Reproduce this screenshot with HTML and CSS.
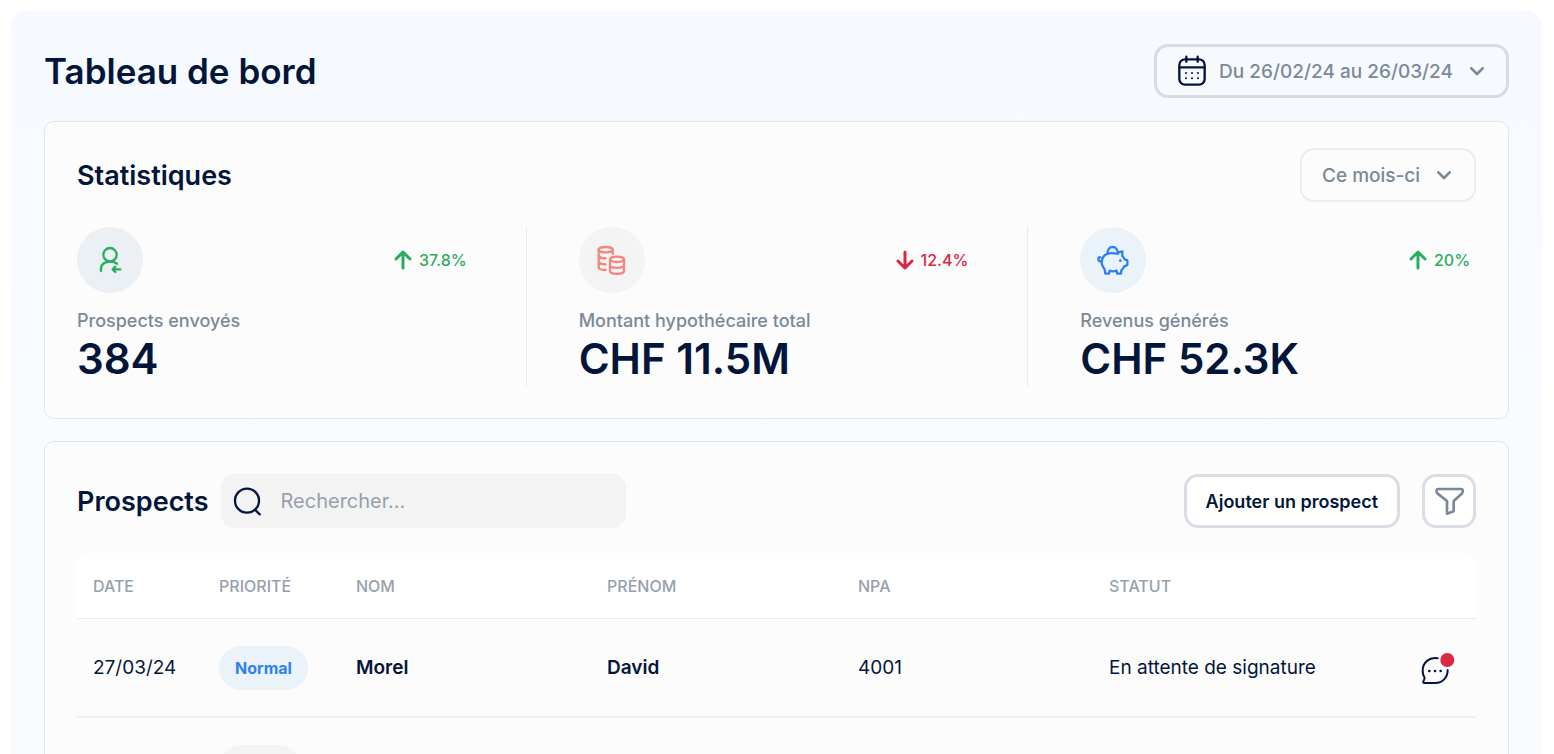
FILE: index.html
```html
<!DOCTYPE html>
<html lang="fr">
<head>
    <meta charset="UTF-8">
    <meta name="viewport" content="width=device-width, initial-scale=1.0">
    <title>Tableau de bord</title>
    <link rel="stylesheet" href="styles.css">
</head>
<body>
    <main class="dashboard">
        <header class="page-header">
            <h1>Tableau de bord</h1>
            <button type="button" class="btn date-range" aria-haspopup="dialog">
                <svg class="icon-calendar" width="30" height="32" viewBox="0 0 90 96" aria-hidden="true">
                    <rect x="7" y="13" width="76" height="76" rx="17"/>
                    <path d="M7 37H83M28 5V20M62 5V20"/>
                    <g class="dots">
                        <circle cx="27" cy="54" r="3"/><circle cx="45" cy="54" r="3"/><circle cx="63" cy="54" r="3"/>
                        <circle cx="27" cy="70" r="3"/><circle cx="45" cy="70" r="3"/><circle cx="63" cy="70" r="3"/>
                    </g>
                </svg>
                <span>Du 26/02/24 au 26/03/24</span>
                <svg class="chevron" width="14" height="9" viewBox="0 0 42 27" aria-hidden="true"><path d="M4 4L21 21L38 4"/></svg>
            </button>
        </header>

        <section class="card">
            <div class="card-header">
                <h2>Statistiques</h2>
                <div class="period">
                    <select aria-label="Période">
                        <option>Ce mois-ci</option>
                    </select>
                    <svg class="chevron" width="14" height="9" viewBox="0 0 42 27" aria-hidden="true"><path d="M4 4L21 21L38 4"/></svg>
                </div>
            </div>

            <div class="stats">
                <div class="stat">
                    <div class="stat-top">
                        <span class="stat-icon green">
                            <svg width="26" height="30" viewBox="0 0 78 90" aria-hidden="true">
                                <circle cx="39" cy="29" r="20"/>
                                <path d="M12 78V71C12 58 24 50 39 50C48 50 55 52 60 56M70 73H48M55 65L47 73L55 81"/>
                            </svg>
                        </span>
                        <span class="trend up">
                            <svg width="18" height="20" viewBox="0 0 18 20" aria-hidden="true"><path d="M9 18V2M2 9L9 2L16 9"/></svg>
                            37.8%
                        </span>
                    </div>
                    <p class="stat-label">Prospects envoyés</p>
                    <p class="stat-value">384</p>
                </div>
                <div class="stat">
                    <div class="stat-top">
                        <span class="stat-icon coral">
                            <svg width="33" height="30" viewBox="0 0 99 90" aria-hidden="true">
                                <ellipse cx="32" cy="14" rx="21" ry="8"/>
                                <path d="M11 14V67C11 72 19 75 32 75M53 14V27M11 31C11 37 20 40 32 40M11 49C11 55 19 58 32 58"/>
                                <ellipse cx="66" cy="43" rx="21" ry="8"/>
                                <path d="M45 43V79C45 89 87 89 87 79V43M45 61C45 71 87 71 87 61"/>
                            </svg>
                        </span>
                        <span class="trend down">
                            <svg width="18" height="20" viewBox="0 0 18 20" aria-hidden="true"><path d="M9 2V18M2 11L9 18L16 11"/></svg>
                            12.4%
                        </span>
                    </div>
                    <p class="stat-label">Montant hypothécaire total</p>
                    <p class="stat-value">CHF 11.5M</p>
                </div>
                <div class="stat">
                    <div class="stat-top">
                        <span class="stat-icon blue">
                            <svg width="32" height="30" viewBox="0 0 96 90" aria-hidden="true">
                                <path d="M32 26C31 14 37 6 47 6C57 6 63 14 62 26"/>
                                <path d="M32 26C37 24 55 25 62 26C65 22 71 19 76 19V33C79 36 81 39 83 43L91 46V60L81 65C79 70 77 73 73 76L72 86H61L59 77C53 79 43 79 38 77L36 86H25L23 73C18 68 16 63 14 55C14 40 20 30 32 26Z"/>
                                <path d="M15 49C8 50 4 47 4 42C4 38 7 36 10 37"/>
                                <circle class="eye" cx="70" cy="47" r="4"/>
                            </svg>
                        </span>
                        <span class="trend up">
                            <svg width="18" height="20" viewBox="0 0 18 20" aria-hidden="true"><path d="M9 18V2M2 9L9 2L16 9"/></svg>
                            20%
                        </span>
                    </div>
                    <p class="stat-label">Revenus générés</p>
                    <p class="stat-value">CHF 52.3K</p>
                </div>
            </div>
        </section>

        <section class="card">
            <div class="toolbar">
                <h2>Prospects</h2>
                <label class="search">
                    <svg width="29" height="29" viewBox="0 0 87 87" aria-hidden="true">
                        <circle cx="42" cy="41" r="36"/>
                        <path d="M67 69L80 82"/>
                    </svg>
                    <input type="search" placeholder="Rechercher..." aria-label="Rechercher">
                </label>
                <button type="button" class="btn add">Ajouter un prospect</button>
                <button type="button" class="btn filter" aria-label="Filtrer">
                    <svg width="29" height="28" viewBox="0 0 87 84" aria-hidden="true">
                        <path d="M10 6H78Q83 6 83 11V15Q83 18 80 20L56 42V73L36 80V42L8 20Q5 18 5 15V11Q5 6 10 6Z"/>
                    </svg>
                </button>
            </div>

            <table class="prospects">
                <colgroup>
                    <col class="col-date">
                    <col class="col-priority">
                    <col span="4">
                    <col class="col-actions">
                </colgroup>
                <thead>
                    <tr>
                        <th scope="col">DATE</th>
                        <th scope="col">PRIORITÉ</th>
                        <th scope="col">NOM</th>
                        <th scope="col">PRÉNOM</th>
                        <th scope="col">NPA</th>
                        <th scope="col">STATUT</th>
                        <td></td>
                    </tr>
                </thead>
                <tbody>
                    <tr>
                        <td>27/03/24</td>
                        <td><span class="badge">Normal</span></td>
                        <td class="name">Morel</td>
                        <td class="name">David</td>
                        <td>4001</td>
                        <td>En attente de signature</td>
                        <td class="actions">
                            <button type="button" class="chat" aria-label="Messages">
                                <svg width="34" height="32" viewBox="0 0 102 96" aria-hidden="true">
                                    <path d="M50 19C25 14 5 32 5 56C5 65 7 72 11 78C10 82 9 85 7 88C6 91 7 93 10 93H43C64 93 80 77 80 54"/>
                                    <circle class="dot" cx="25" cy="57" r="4"/><circle class="dot" cx="42" cy="57" r="4"/><circle class="dot" cx="59" cy="57" r="4"/>
                                    <circle class="unread" cx="79" cy="24" r="21"/>
                                </svg>
                            </button>
                        </td>
                    </tr>
                    <tr>
                        <td></td>
                        <td><span class="badge low"></span></td>
                        <td></td>
                        <td></td>
                        <td></td>
                        <td></td>
                        <td></td>
                    </tr>
                </tbody>
            </table>
        </section>
    </main>
</body>
</html>
```
FILE: styles.css
```css
* {
    box-sizing: border-box;
}
body {
    margin: 0;
    height: 100vh;
    overflow: hidden;
    background-color: #fff;
    color: #03163a;
    font-family: Inter, sans-serif;
    font-size: 19px;
}
h1, h2, p {
    margin: 0;
}
h1 {
    font-size: 35px;
    font-weight: 600;
}
h2 {
    font-size: 27px;
    font-weight: 600;
}
button, input, select {
    font: inherit;
    color: inherit;
}
svg {
    display: block;
    flex: none;
    fill: none;
    stroke: currentColor;
    stroke-linecap: round;
    stroke-linejoin: round;
}
.dashboard {
    margin: 11px 12px 0 11px;
    padding: 33px;
    border-radius: 16px;
    background: linear-gradient(#f6faff, #f8fcff 500px);
}
.page-header, .card-header, .toolbar {
    display: flex;
    align-items: center;
    justify-content: space-between;
    height: 54px;
}
.btn {
    display: flex;
    align-items: center;
    justify-content: center;
    height: 54px;
    padding: 0 19px;
    border: 3px solid #d9dee5;
    border-radius: 14px;
    background-color: #fff;
    cursor: pointer;
}
.date-range {
    gap: 12px;
    padding: 0 22px 0 20px;
    border-color: #d8dce1;
    background-color: transparent;
    color: #7a8999;
    font-weight: 500;
}
.date-range .chevron {
    margin-left: 5px;
}
.icon-calendar {
    color: #03163a;
    stroke-width: 7;
}
.icon-calendar .dots {
    fill: currentColor;
    stroke: none;
}
.chevron {
    stroke-width: 8;
}
.card {
    margin-top: 23px;
    padding: 26px 32px 32px;
    border: 1px solid #dfe5ee;
    border-radius: 10px;
    background-color: #fcfcfc;
}
.card + .card {
    margin-top: 22px;
}
.period {
    display: grid;
    align-items: center;
    color: #7a8999;
}
.period select, .period .chevron {
    grid-area: 1 / 1;
}
.period select {
    appearance: none;
    height: 54px;
    padding: 0 53px 0 20px;
    border: 2px solid #ececee;
    border-radius: 14px;
    background-color: transparent;
    font-weight: 500;
}
.period .chevron {
    justify-self: end;
    margin-right: 25px;
    pointer-events: none;
}
.stats {
    display: flex;
    margin-top: 25px;
}
.stat {
    flex: 1;
    padding-right: 53px;
}
.stat:last-child {
    padding-right: 0;
}
.stat + .stat {
    padding-left: 52px;
    border-left: 1px solid #e8eaed;
}
.stat-top {
    display: flex;
    align-items: center;
    justify-content: space-between;
    padding-right: 6px;
}
.stat-icon {
    display: grid;
    place-items: center;
    width: 66px;
    height: 66px;
    border-radius: 50%;
    stroke-width: 7;
}
.stat-icon.green {
    background-color: #ebf0f4;
    color: #27ae60;
}
.stat-icon.coral {
    background-color: #f4f4f4;
    color: #f2857d;
}
.stat-icon.blue {
    background-color: #eaf2fa;
    color: #2f80ed;
}
.stat-icon .eye {
    fill: currentColor;
    stroke: none;
}
.trend {
    display: flex;
    align-items: center;
    gap: 7px;
    font-size: 16px;
    font-weight: 500;
    stroke-width: 3;
}
.trend.up {
    color: #27ae60;
}
.trend.down {
    color: #dc2642;
}
.stat-label {
    margin-top: 17px;
    color: #7a8999;
    font-size: 18px;
    font-weight: 500;
    line-height: 22px;
}
.stat-value {
    font-size: 42px;
    font-weight: 600;
    line-height: 54px;
}
.toolbar {
    justify-content: flex-start;
    margin-top: 6px;
}
.search {
    display: flex;
    align-items: center;
    gap: 19px;
    width: 405px;
    height: 54px;
    margin: 0 auto 0 12px;
    padding: 0 12px;
    border-radius: 14px;
    background-color: #f3f3f3;
    stroke-width: 7;
}
.search input {
    flex: 1;
    min-width: 0;
    padding: 0;
    border: 0;
    outline: 0;
    background-color: transparent;
    font-size: 20px;
}
.search input::placeholder {
    color: #95a1ae;
}
.add {
    font-size: 18px;
    font-weight: 600;
}
.filter {
    width: 54px;
    margin-left: 22px;
    padding: 0;
    color: #7a8999;
    stroke-width: 8;
}
.prospects {
    width: 100%;
    margin-top: 25px;
    border-collapse: separate;
    border-spacing: 0;
    table-layout: fixed;
}
.col-date {
    width: 126px;
}
.col-priority {
    width: 137px;
}
.col-actions {
    width: 132px;
}
.prospects th, .prospects td {
    height: 99px;
    padding: 0 0 0 16px;
    border-bottom: 2px solid #f0f1f2;
    text-align: left;
    white-space: nowrap;
}
.prospects thead th, .prospects thead td {
    height: 66px;
    border-bottom: 1px solid #e8eaed;
    background-color: #fff;
    color: #95a1ae;
    font-size: 16px;
    font-weight: 500;
}
.prospects thead th:first-child {
    border-top-left-radius: 10px;
}
.prospects thead td:last-child {
    border-top-right-radius: 10px;
}
.prospects .name {
    font-weight: 600;
}
.badge {
    display: flex;
    align-items: center;
    width: fit-content;
    height: 44px;
    padding: 0 16px;
    border-radius: 22px;
    background-color: #eaf2fa;
    color: #2f80ed;
    font-size: 16px;
    font-weight: 700;
}
.badge.low {
    width: 82px;
    background-color: #f4f4f4;
}
.prospects .actions {
    padding-right: 21px;
}
.chat {
    display: block;
    margin-left: auto;
    padding: 0;
    border: 0;
    background: none;
    stroke-width: 6;
    cursor: pointer;
}
.chat .dot {
    fill: currentColor;
    stroke: none;
}
.chat .unread {
    fill: #dc2642;
    stroke: none;
}
```
